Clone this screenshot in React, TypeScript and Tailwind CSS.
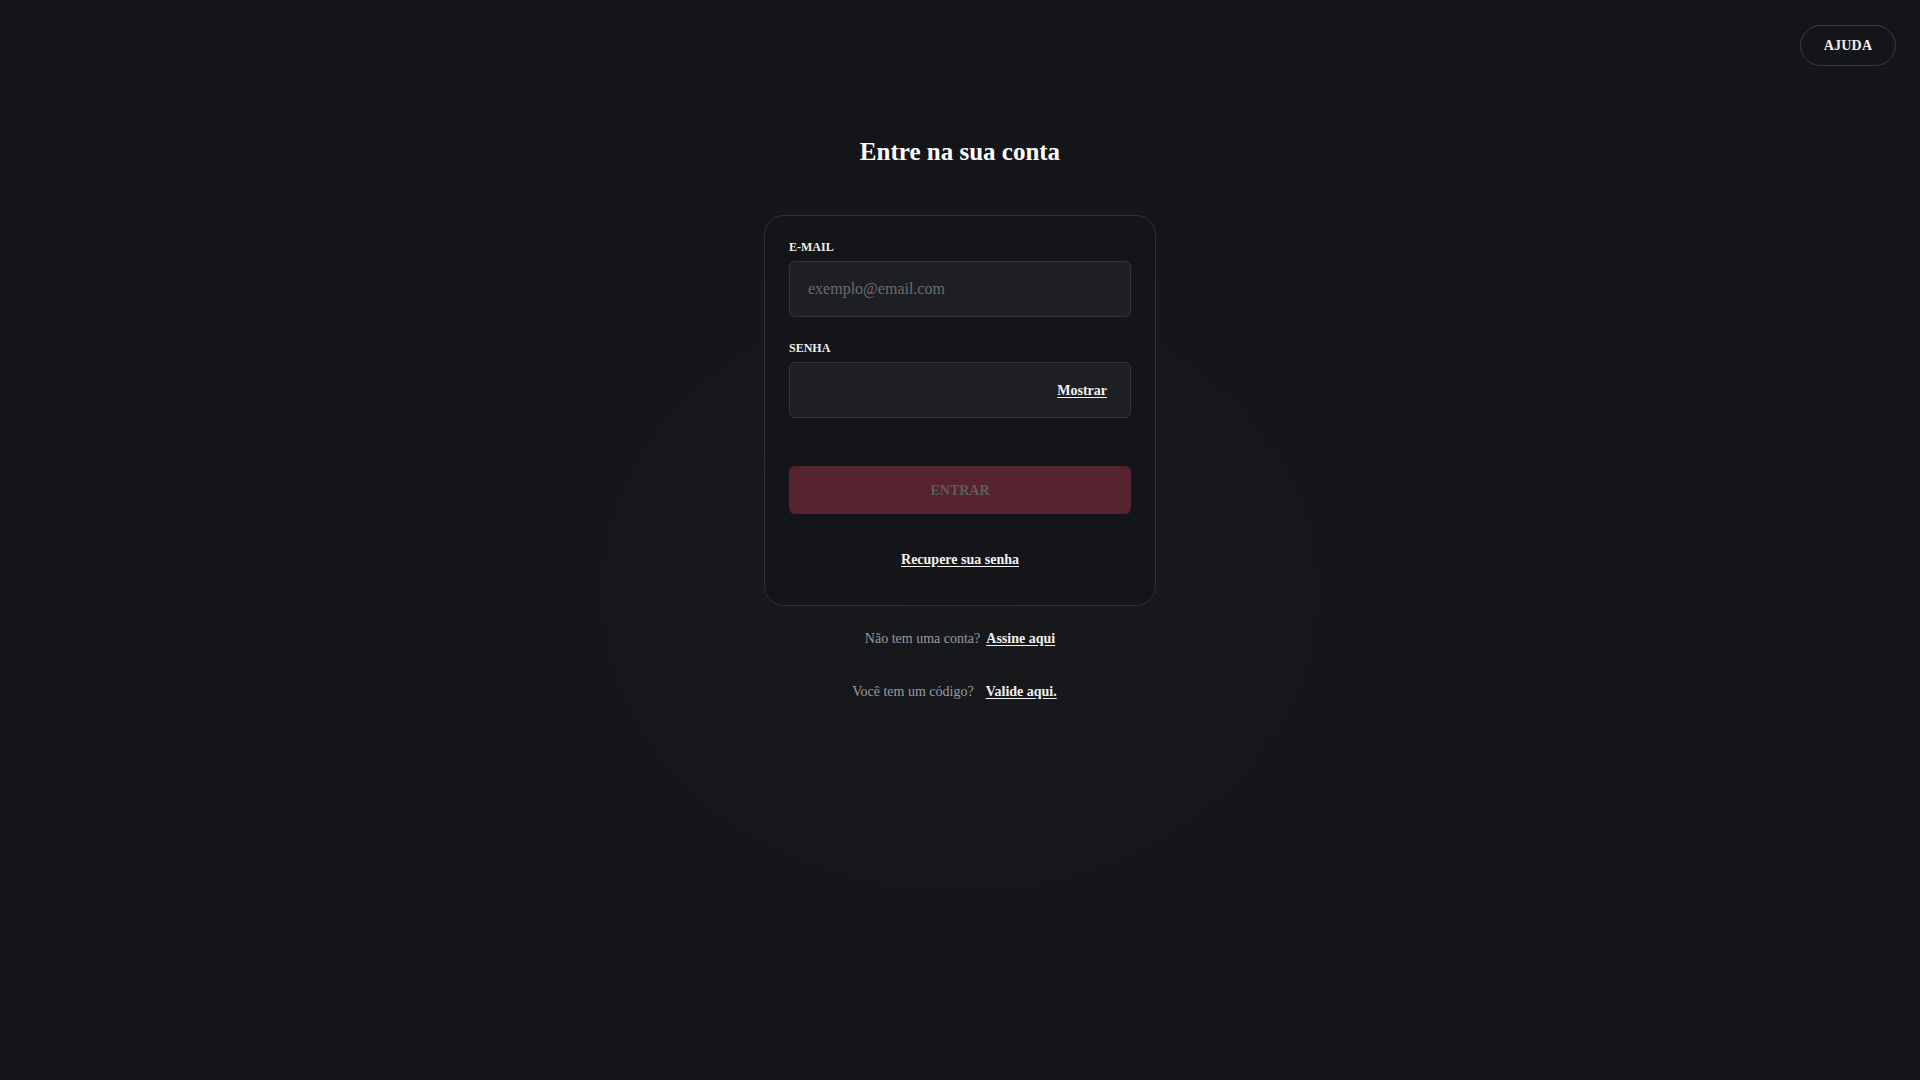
import { useState } from 'react'

export default function App() {
  const [email, setEmail] = useState('')
  const [password, setPassword] = useState('')
  const [show, setShow] = useState(false)

  return (
    <div className="min-h-screen w-full bg-[#141518] bg-[radial-gradient(ellipse_30%_45%_at_50%_55%,#17191c_0%,#141518_100%)] font-['Liberation_Serif',serif] text-white">
      {/* header */}
      <div className="flex justify-end px-6 pt-[25px]">
        <button className="h-[41px] w-[96px] rounded-full border border-[#3a3b3f] text-[14px] font-bold tracking-[0.2px] text-[#f2f2f2]">
          AJUDA
        </button>
      </div>

      <div className="flex flex-col items-center">
        <h1 className="mt-[71px] text-[25px] font-bold leading-[30px] text-white">Entre na sua conta</h1>

        <div className="mt-[48px] w-[392px] rounded-[20px] border border-[#2f3034] bg-[#141518] px-6 pb-[34px] pt-[24px]">
          <label className="mb-[7px] block text-[12px] font-bold leading-[14px] text-[#f0f0f0]">E-MAIL</label>
          <input
            type="email"
            value={email}
            onChange={(e) => setEmail(e.target.value)}
            placeholder="exemplo@email.com"
            className="h-[56px] w-full rounded-[6px] border border-[#34353a] bg-[#1e1f22] px-[18px] text-[16px] text-white outline-none placeholder:text-[#6b6b6e]"
          />

          <label className="mb-[7px] mt-[24px] block text-[12px] font-bold leading-[14px] text-[#f0f0f0]">SENHA</label>
          <div className="flex h-[56px] w-full items-center rounded-[6px] border border-[#34353a] bg-[#1e1f22] pl-[18px] pr-[23px]">
            <input
              type={show ? 'text' : 'password'}
              value={password}
              onChange={(e) => setPassword(e.target.value)}
              className="h-full flex-1 bg-transparent text-[16px] text-white outline-none"
            />
            <button
              type="button"
              onClick={() => setShow(!show)}
              className="text-[14px] font-bold text-[#f2f2f2] underline underline-offset-2"
            >
              {show ? 'Ocultar' : 'Mostrar'}
            </button>
          </div>

          <button
            disabled
            className="mt-[48px] h-[48px] w-full rounded-[6px] bg-[#56242f] text-[14px] font-bold text-[#5e5c5e]"
          >
            ENTRAR
          </button>

          <div className="mt-[33px] text-center">
            <a href="#" className="text-[14px] font-bold leading-[20px] text-[#f2f2f2] underline underline-offset-2">
              Recupere sua senha
            </a>
          </div>
        </div>

        <p className="mt-[23px] text-[14px] leading-[20px] text-[#9a9a9c]">
          Não tem uma conta?
          <a href="#" className="ml-[6px] font-bold text-[#f0f0f0] underline underline-offset-2">
            Assine aqui
          </a>
        </p>

        <p className="mt-[33px] pr-[11px] text-[14px] leading-[20px] text-[#9a9a9c]">
          Você tem um código?
          <a href="#" className="ml-[12px] font-bold text-[#f0f0f0] underline underline-offset-2">
            Valide aqui.
          </a>
        </p>
      </div>
    </div>
  )
}
